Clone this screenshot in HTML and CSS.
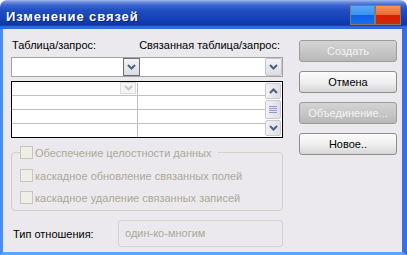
FILE: index.html
```html
<!DOCTYPE html>
<html lang="ru">
<head>
    <meta charset="UTF-8">
    <title>Изменение связей</title>
    <link rel="stylesheet" href="styles.css">
</head>
<body>
    <div class="window">
        <!-- заголовок окна -->
        <div class="titlebar">
            <span class="title">Изменение связей</span>
            <div class="caption_btns">
                <span class="cap cap_blue"></span>
                <span class="cap cap_red"></span>
            </div>
        </div>

        <div class="client">
            <div class="main">
                <div class="labels">
                    <span>Таблица/запрос:</span>
                    <span>Связанная таблица/запрос:</span>
                </div>

                <div class="combos">
                    <div class="combo combo_left">
                        <span class="drop drop_focus">
                            <svg width="9" height="6" viewBox="0 0 9 6"><polyline points="1,1 4.5,4.5 8,1" fill="none" stroke="#4d6185" stroke-width="2"/></svg>
                        </span>
                    </div>
                    <div class="combo combo_right">
                        <span class="drop">
                            <svg width="9" height="6" viewBox="0 0 9 6"><polyline points="1,1 4.5,4.5 8,1" fill="none" stroke="#4d6185" stroke-width="2"/></svg>
                        </span>
                    </div>
                </div>

                <!-- сетка полей -->
                <div class="grid">
                    <div class="cells">
                        <div class="row">
                            <div class="cell c1">
                                <span class="drop_small">
                                    <svg width="9" height="6" viewBox="0 0 9 6"><polyline points="1,1 4.5,4.5 8,1" fill="none" stroke="#c9c7c0" stroke-width="2"/></svg>
                                </span>
                            </div>
                            <div class="cell"></div>
                        </div>
                        <div class="row"><div class="cell c1"></div><div class="cell"></div></div>
                        <div class="row"><div class="cell c1"></div><div class="cell"></div></div>
                        <div class="row"><div class="cell c1"></div><div class="cell"></div></div>
                    </div>
                    <div class="scroll">
                        <span class="sb_btn">
                            <svg width="9" height="6" viewBox="0 0 9 6"><polyline points="1,5 4.5,1.5 8,5" fill="none" stroke="#4d6185" stroke-width="2"/></svg>
                        </span>
                        <span class="sb_thumb">
                            <svg width="8" height="7" viewBox="0 0 8 7"><path d="M0 0.5h8M0 2.5h8M0 4.5h8M0 6.5h8" stroke="#8c9cc4" stroke-width="1"/></svg>
                        </span>
                        <span class="sb_btn">
                            <svg width="9" height="6" viewBox="0 0 9 6"><polyline points="1,1 4.5,4.5 8,1" fill="none" stroke="#4d6185" stroke-width="2"/></svg>
                        </span>
                    </div>
                </div>

                <fieldset class="group">
                    <legend><span class="check"></span>Обеспечение целостности данных</legend>
                    <div class="opt"><span class="check"></span>каскадное обновление связанных полей</div>
                    <div class="opt opt_last"><span class="check"></span>каскадное удаление связанных записей</div>
                </fieldset>

                <div class="reltype">
                    <span class="rel_label">Тип отношения:</span>
                    <div class="rel_box">один-ко-многим</div>
                </div>
            </div>

            <!-- кнопки справа -->
            <div class="side">
                <div class="btn btn_off">Создать</div>
                <div class="btn">Отмена</div>
                <div class="btn btn_off">Объединение...</div>
                <div class="btn">Новое..</div>
            </div>
        </div>
    </div>
</body>
</html>
```

FILE: styles.css
```css
* {
    margin: 0;
    padding: 0;
    box-sizing: border-box;
}
body {
    background: #fff;
    font-family: "Liberation Sans", Arial, sans-serif;
    font-size: 11px;
    color: #000;
}
.window {
    width: 407px;
    height: 255px;
    display: flex;
    flex-direction: column;
}

/* заголовок */
.titlebar {
    height: 29px;
    display: flex;
    align-items: center;
    padding-left: 6px;
    border-radius: 7px 7px 0 0;
    background: linear-gradient(to bottom, #a4b8ea 0, #6f90de 2px, #3d67d0 5px, #214fc2 10px, #123fb2 20px, #0c38a6 25px, #3c70e6 27px, #2a60e0 29px);
}
.title {
    padding-top: 3px;
    color: #fff;
    font-weight: bold;
    font-size: 13px;
    letter-spacing: 0.9px;
    text-shadow: 1px 1px #0a2070;
}
.caption_btns {
    margin-left: auto;
    margin-right: 6px;
    display: flex;
}
.cap {
    height: 20px;
    border: 1px solid #847a6c;
}
.cap_blue {
    width: 25px;
    background: linear-gradient(to bottom, #58aaf8 0, #3a92f0 50%, #0c60e4 50%, #1a6eee 100%);
}
.cap_red {
    width: 26px;
    background: linear-gradient(to bottom, #f89456 0, #ec6634 50%, #dc1e02 50%, #cc2a0c 100%);
}

/* клиентская область */
.client {
    flex: 1;
    display: flex;
    background: #ebe9ed;
    border-left: 3px solid #4a8cf6;
    border-right: 5px solid #3a6ee4;
    border-bottom: 3px solid #5ea4ff;
}
.main {
    width: 272px;
    margin-left: 8px;
    padding-top: 10px;
}
.labels {
    display: flex;
    justify-content: space-between;
    height: 13px;
    line-height: 13px;
    padding-left: 1px;
    padding-right: 3px;
}
.combos {
    display: flex;
    height: 20px;
    margin-top: 5px;
}
.combo {
    display: flex;
    justify-content: flex-end;
    background: #fff;
    border: 1px solid #a3a3a3;
}
.combo_left {
    width: 129px;
    border-right: none;
}
.combo_right {
    width: 143px;
    border-left: none;
}
.drop {
    width: 17px;
    height: 18px;
    display: flex;
    align-items: center;
    justify-content: center;
    border: 1px solid #c4c4cc;
    border-radius: 2px;
    background: linear-gradient(to bottom, #f4f4f6, #dcdce2);
}
.drop_focus {
    border-color: #6e6e6e;
    border-radius: 0;
}

/* сетка */
.grid {
    display: flex;
    height: 57px;
    margin-top: 4px;
    border: 1px solid #000;
    background: #fff;
}
.cells {
    flex: 1;
}
.row {
    display: flex;
    height: 14px;
    border-bottom: 1px solid #c0c0c0;
}
.row:last-child {
    height: 13px;
    border-bottom: none;
}
.cell {
    flex: 1;
}
.c1 {
    flex: 0 0 126px;
    display: flex;
    justify-content: flex-end;
    padding-right: 1px;
    border-right: 1px solid #c0c0c0;
}
.drop_small {
    width: 16px;
    height: 12px;
    display: flex;
    align-items: center;
    justify-content: center;
    border: 1px solid #dcdcdc;
    background: #f4f4f4;
}
.scroll {
    width: 17px;
    display: flex;
    flex-direction: column;
    gap: 1px;
    padding: 1px 1px 1px 0;
}
.sb_btn, .sb_thumb {
    display: flex;
    align-items: center;
    justify-content: center;
    border: 1px solid #c8c8d0;
    border-radius: 2px;
    background: linear-gradient(to right, #f2f2f4, #dedee4);
}
.sb_btn {
    height: 16px;
}
.sb_thumb {
    height: 19px;
}

/* группа флажков */
.group {
    margin-top: 8px;
    padding: 10px 8px 6px 8px;
    border: 1px solid #d3d0c4;
    border-radius: 4px;
    color: #aca899;
}
.group legend {
    display: flex;
    align-items: center;
    height: 13px;
    padding-right: 7px;
}
.check {
    width: 13px;
    height: 13px;
    margin-right: 2px;
    border: 1px solid #c9c6b8;
    background: #efeee8;
}
.opt {
    display: flex;
    align-items: center;
    height: 13px;
    margin-bottom: 9px;
}
.opt_last {
    margin-bottom: 0;
}

/* тип отношения */
.reltype {
    display: flex;
    align-items: center;
    margin-top: 9px;
}
.rel_label {
    flex: 0 0 107px;
    padding-left: 2px;
}
.rel_box {
    width: 165px;
    height: 27px;
    line-height: 25px;
    padding-left: 6px;
    border: 1px solid #d6d3cc;
    border-radius: 3px;
    color: #aca899;
}

/* кнопки */
.side {
    width: 98px;
    margin-left: 16px;
    padding-top: 11px;
    display: flex;
    flex-direction: column;
    gap: 9px;
}
.btn {
    height: 22px;
    line-height: 20px;
    text-align: center;
    border: 1px solid #8e8e8e;
    border-radius: 3px;
    background: linear-gradient(to bottom, #fcfcfc, #eeeeee 55%, #d6d6d6);
}
.btn_off {
    color: #f4f4f4;
    border-color: #9c9c9c;
    background: linear-gradient(to bottom, #d4d4d4, #c4c4c4 60%, #b8b8b8);
}
```
